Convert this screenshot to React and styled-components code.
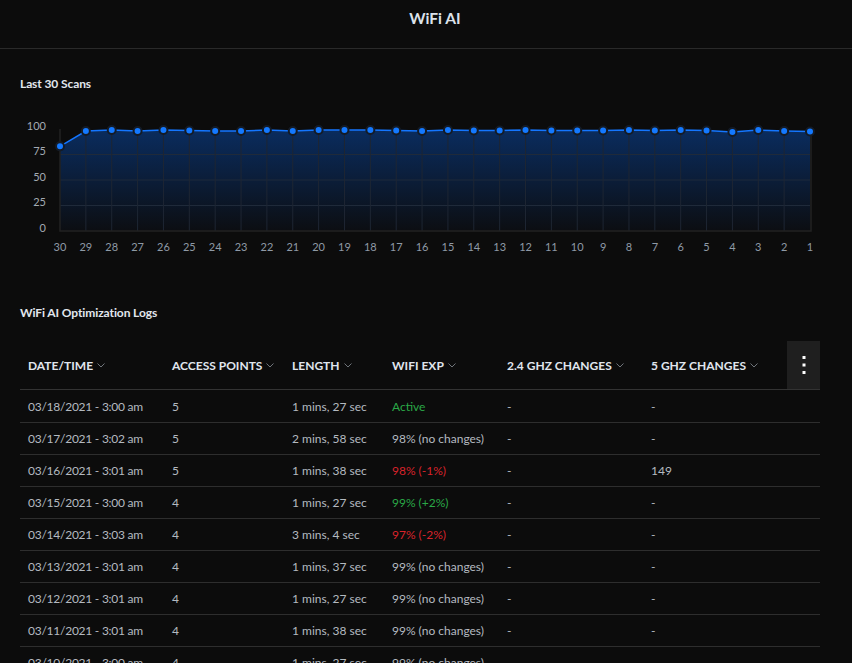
import React from "react";
import styled, { createGlobalStyle } from "styled-components";

const GlobalStyle = createGlobalStyle`
  body {
    margin: 0;
    background: #0c0c0c;
    font-family: Lato, "Open Sans", sans-serif;
  }
`;

const Page = styled.div`
  min-height: 663px;
  background: #0c0c0c;
  color: #b4bac0;
`;

const Header = styled.header`
  height: 49px;
  border-bottom: 1px solid #2a2a2a;
  display: flex;
  justify-content: center;
  align-items: flex-start;
  box-sizing: border-box;
  padding-top: 9px;
`;

const Title = styled.h1`
  margin: 0 0 0 18px;
  font-size: 15.5px;
  line-height: 18px;
  font-weight: 700;
  color: #dce2ea;
`;

const Content = styled.main`
  padding: 0 20px;
`;

const SectionTitle = styled.h2`
  margin: ${(p) => p.top}px 0 0;
  font-size: 12px;
  line-height: 14px;
  font-weight: 700;
  color: #e2e7ee;
  letter-spacing: -0.1px;
`;

const ChartBox = styled.div`
  margin-top: 19px;
  height: 150px;
  svg {
    display: block;
  }
`;

const Table = styled.div`
  margin-top: 21px;
  width: 800px;
`;

const Row = styled.div`
  display: grid;
  grid-template-columns: 144px 120px 100px 115px 144px 136px 33px;
  padding-left: 8px;
  height: ${(p) => (p.head ? 48 : p.first ? 32 : 31)}px;
  align-items: center;
  border-bottom: 1px solid ${(p) => (p.head ? "#333" : "#2e2e2e")};
  font-size: 12px;
`;

const HeadCell = styled.div`
  display: flex;
  align-items: center;
  font-weight: 700;
  color: #e0e6ee;
  white-space: nowrap;
  svg {
    margin-left: 4px;
    color: #6f747a;
  }
`;

const MenuCell = styled.div`
  align-self: stretch;
  background: #1f1f1f;
  display: flex;
  align-items: center;
  justify-content: center;
`;

const Cell = styled.div`
  white-space: nowrap;
  letter-spacing: ${(p) => (p.date ? "-0.25px" : "0")};
  color: ${(p) =>
    p.tone === "good" ? "#2aa847" : p.tone === "bad" ? "#d8232b" : "#b4bac0"};
`;

const Chevron = () => (
  <svg width="8" height="5" viewBox="0 0 8 5" fill="none">
    <path d="M0.5 0.5 L4 4 L7.5 0.5" stroke="currentColor" strokeWidth="1" />
  </svg>
);

const Kebab = () => (
  <svg width="4" height="20" viewBox="0 0 4 20">
    <rect x="0.5" y="1" width="3" height="3" fill="#fff" />
    <rect x="0.5" y="8.5" width="3" height="3" fill="#fff" />
    <rect x="0.5" y="16" width="3" height="3" fill="#fff" />
  </svg>
);

const scans = [
  83, 98, 99, 98, 99, 98.5, 98, 98, 99, 98, 99, 99, 99, 98.5, 98, 99, 98.5,
  98.5, 99, 98.5, 98.5, 98.5, 99, 98.5, 99, 98.5, 97, 99, 98, 97.5,
];

const X0 = 60;
const X1 = 810;
const step = (X1 - X0) / 29;
const yOf = (v) => 231 - v * 1.02;

const ScanChart = () => {
  const pts = scans.map((v, i) => [X0 + i * step, yOf(v)]);
  const line = pts.map((p, i) => `${i ? "L" : "M"}${p[0]} ${p[1]}`).join(" ");
  const area = `${line} L${X1} 231 L${X0} 231 Z`;
  return (
    <svg width="812" height="150" viewBox="20 110 812 150">
      <defs>
        <linearGradient id="fill" x1="0" y1="0" x2="0" y2="1">
          <stop offset="0" stopColor="#0a2c5e" />
          <stop offset="1" stopColor="#0c0e12" />
        </linearGradient>
      </defs>
      <path d={area} fill="url(#fill)" />
      {[25, 50, 75].map((v) => (
        <line key={v} x1={X0} x2={X1} y1={yOf(v)} y2={yOf(v)} stroke="#1f2a3a" strokeWidth="1" />
      ))}
      {pts.slice(1, 29).map((p, i) => (
        <line key={i} x1={p[0]} x2={p[0]} y1={p[1]} y2={231} stroke="#1e2633" strokeWidth="1" />
      ))}
      <path d={`M${X0} ${yOf(100)} L${X0} 231 L${X1 + 1} 231 L${X1 + 1} ${yOf(98)}`} fill="none" stroke="#222" strokeWidth="1.5" />
      <path d={line} fill="none" stroke="#1476ff" strokeWidth="1.5" />
      {pts.map((p, i) => (
        <circle key={i} cx={p[0]} cy={p[1]} r="4" fill="#1479ff" stroke="#141b26" strokeWidth="2" />
      ))}
      {[0, 25, 50, 75, 100].map((v) => (
        <text key={v} x="46" y={yOf(v) + 0.5} textAnchor="end" fontSize="11" fill="#a3aab2" fontFamily="Lato, sans-serif">
          {v}
        </text>
      ))}
      {pts.map((p, i) => (
        <text key={i} x={p[0]} y="251" textAnchor="middle" fontSize="11" fill="#8f9aa6" fontFamily="Lato, sans-serif">
          {30 - i}
        </text>
      ))}
    </svg>
  );
};

const columns = [
  "DATE/TIME",
  "ACCESS POINTS",
  "LENGTH",
  "WIFI EXP",
  "2.4 GHZ CHANGES",
  "5 GHZ CHANGES",
];

const logs = [
  ["03/18/2021 - 3:00 am", "5", "1 mins, 27 sec", "Active", "good", "-", "-"],
  ["03/17/2021 - 3:02 am", "5", "2 mins, 58 sec", "98% (no changes)", "", "-", "-"],
  ["03/16/2021 - 3:01 am", "5", "1 mins, 38 sec", "98% (-1%)", "bad", "-", "149"],
  ["03/15/2021 - 3:00 am", "4", "1 mins, 27 sec", "99% (+2%)", "good", "-", "-"],
  ["03/14/2021 - 3:03 am", "4", "3 mins, 4 sec", "97% (-2%)", "bad", "-", "-"],
  ["03/13/2021 - 3:01 am", "4", "1 mins, 37 sec", "99% (no changes)", "", "-", "-"],
  ["03/12/2021 - 3:01 am", "4", "1 mins, 27 sec", "99% (no changes)", "", "-", "-"],
  ["03/11/2021 - 3:01 am", "4", "1 mins, 38 sec", "99% (no changes)", "", "-", "-"],
  ["03/10/2021 - 3:00 am", "4", "1 mins, 27 sec", "99% (no changes)", "", "-", "-"],
];

const App = () => (
  <Page>
    <GlobalStyle />
    <Header>
      <Title>WiFi AI</Title>
    </Header>
    <Content>
      <SectionTitle top={28}>Last 30 Scans</SectionTitle>
      <ChartBox>
        <ScanChart />
      </ChartBox>
      <SectionTitle top={46}>WiFi AI Optimization Logs</SectionTitle>
      <Table>
        <Row head>
          {columns.map((c) => (
            <HeadCell key={c}>
              {c}
              <Chevron />
            </HeadCell>
          ))}
          <MenuCell>
            <Kebab />
          </MenuCell>
        </Row>
        {logs.map((r, i) => (
          <Row key={r[0]} first={i === 0}>
            <Cell date>{r[0]}</Cell>
            <Cell>{r[1]}</Cell>
            <Cell>{r[2]}</Cell>
            <Cell tone={r[4]}>{r[3]}</Cell>
            <Cell>{r[5]}</Cell>
            <Cell>{r[6]}</Cell>
            <div />
          </Row>
        ))}
      </Table>
    </Content>
  </Page>
);

export default App;
